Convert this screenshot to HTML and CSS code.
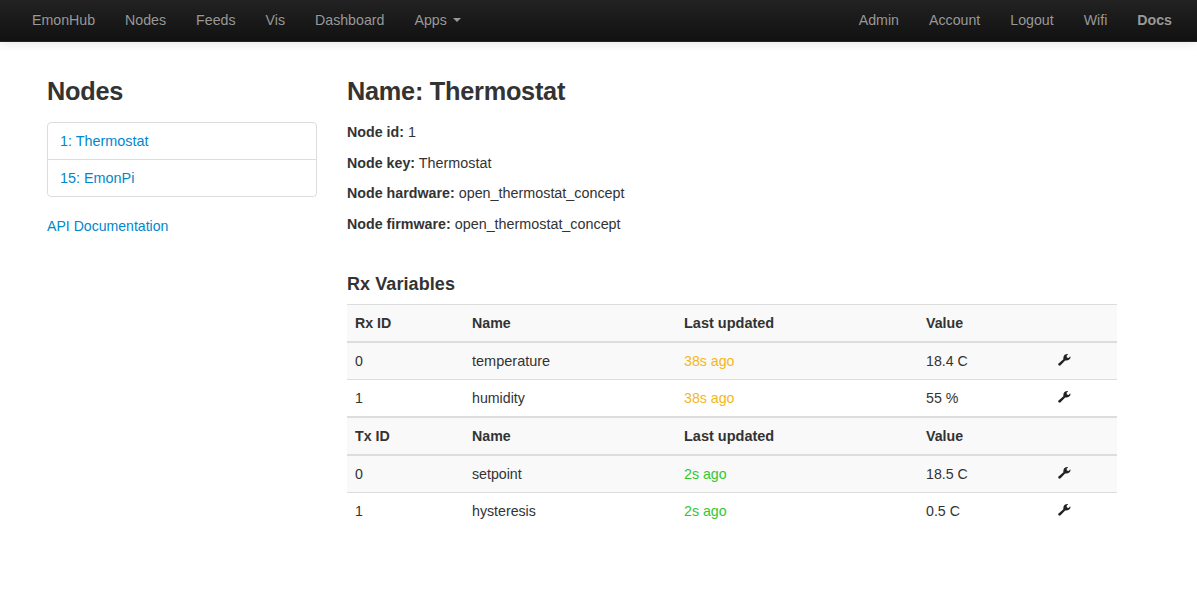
FILE: index.html
```html
<!DOCTYPE html>
<html lang="en">
<head>
<meta charset="utf-8">
<title>Nodes</title>
<link rel="stylesheet" href="styles.css">
</head>
<body>
<svg class="defs" aria-hidden="true"><symbol id="wrench" viewBox="0 0 14 14"><path d="M0.3 10.7 L5.4 6.2 C4.9 3 6.6 1 9.8 1 L10 1.6 L8.6 2.7 L8.9 4.5 L10.7 4.9 L12 3.5 L12.6 3.8 C12.3 6.6 10.3 7.7 7.2 7.4 L2.3 12.6 C1.1 13.2 -0.3 11.8 0.3 10.7Z"/></symbol></svg>
<nav class="navbar">
  <ul class="menu">
    <li><a>EmonHub</a></li><li><a>Nodes</a></li><li><a>Feeds</a></li><li><a>Vis</a></li><li><a>Dashboard</a></li><li><a>Apps<b class="caret"></b></a></li>
  </ul>
  <ul class="menu">
    <li><a>Admin</a></li><li><a>Account</a></li><li><a>Logout</a></li><li><a>Wifi</a></li><li><a class="docs">Docs</a></li>
  </ul>
</nav>
<div class="container">
  <aside class="sidebar">
    <h3>Nodes</h3>
    <ul class="node-list"><li><a>1: Thermostat</a></li><li><a>15: EmonPi</a></li></ul>
    <a class="api">API Documentation</a>
  </aside>
  <main class="content">
    <h3>Name: Thermostat</h3>
    <p><b>Node id:</b> 1</p>
    <p><b>Node key:</b> Thermostat</p>
    <p><b>Node hardware:</b> open_thermostat_concept</p>
    <p><b>Node firmware:</b> open_thermostat_concept</p>
    <h4>Rx Variables</h4>
    <table class="table">
      <colgroup><col class="c-id"><col class="c-name"><col class="c-time"><col class="c-value"><col></colgroup>
      <tbody>
        <tr class="shade"><th>Rx ID</th><th>Name</th><th class="wide">Last updated</th><th>Value</th><th></th></tr>
      </tbody>
      <tbody>
        <tr class="shade"><td>0</td><td class="wide">temperature</td><td class="late">38s ago</td><td>18.4 C</td><td><svg class="icon"><use href="#wrench"/></svg></td></tr>
        <tr><td>1</td><td>humidity</td><td class="late">38s ago</td><td>55 %</td><td><svg class="icon"><use href="#wrench"/></svg></td></tr>
      </tbody>
      <tbody>
        <tr class="shade"><th>Tx ID</th><th>Name</th><th class="wide">Last updated</th><th>Value</th><th></th></tr>
      </tbody>
      <tbody>
        <tr class="shade"><td>0</td><td>setpoint</td><td class="fresh">2s ago</td><td>18.5 C</td><td><svg class="icon"><use href="#wrench"/></svg></td></tr>
        <tr><td>1</td><td>hysteresis</td><td class="fresh">2s ago</td><td>0.5 C</td><td><svg class="icon"><use href="#wrench"/></svg></td></tr>
      </tbody>
    </table>
  </main>
</div>
</body>
</html>
```
FILE: styles.css
```css
* { box-sizing: border-box; }
body { margin: 0; background: #fff; color: #333; font: 14.2px/20px "Liberation Sans", Arial, sans-serif; }
.defs { display: none; }
ul { list-style: none; margin: 0; padding: 0; }
a { color: #08c; text-decoration: none; }
.navbar { display: flex; justify-content: space-between; height: 42px; padding: 0 10px 0 17px; background: linear-gradient(#222, #111); border-bottom: 1px solid #252525; box-shadow: 0 1px 10px rgba(0,0,0,.1); }
.menu { display: flex; }
.menu a { display: flex; padding: 10px 15px; color: #999; text-shadow: 0 -1px 0 rgba(0,0,0,.25); }
.menu .docs { font-weight: bold; }
.caret { width: 0; height: 0; margin: 8px 0 0 6px; border: 4px solid transparent; border-top-color: #999; border-bottom: 0; }
.container { display: flex; gap: 30px; padding: 29px 80px 0 47px; }
.sidebar { width: 270px; flex: none; }
.content { width: 770px; }
h3 { margin: 0 0 11px; font-size: 25.3px; line-height: 40px; letter-spacing: -.25px; }
.node-list { margin-bottom: 19px; border: 1px solid #ddd; border-radius: 4px; font-size: 14.4px; }
.node-list li { padding: 8px 12px; }
.node-list li + li { border-top: 1px solid #ddd; }
.api { font-size: 14.1px; }
p { margin: 0 0 10.6px; font-size: 14.35px; }
p b { font-size: 14.25px; }
h4 { margin: 40px 0 10px; font-size: 18px; line-height: 20px; letter-spacing: .08px; }
.table { width: 100%; table-layout: fixed; border-collapse: collapse; font-size: 14.2px; }
.c-id { width: 117px; }
.c-name { width: 212px; }
.c-time { width: 242px; }
.c-value { width: 132px; }
.table th, .table td { padding: 8px; text-align: left; vertical-align: top; border-top: 1px solid #ddd; }
.table .wide { font-size: 14.5px; }
.table tbody + tbody { border-top: 2px solid #ddd; }
.shade { background: #f9f9f9; }
.late { color: #f3b71d; }
.fresh { color: #32c832; }
.icon { display: block; width: 14px; height: 14px; margin-top: 2px; fill: #222; }
```
